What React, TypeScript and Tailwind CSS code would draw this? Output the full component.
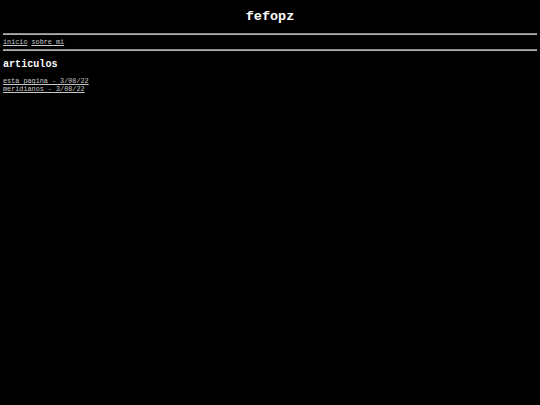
export default function App() {
  return (
    <div className="min-h-[405px] w-full bg-black px-[3px] pt-[8px] text-white" style={{ fontFamily: '"Liberation Mono", "Courier New", monospace' }}>
      <h1 className="h-[18px] text-center text-[13.5px] font-bold leading-[18px]">fefopz</h1>
      <div className="mt-[7px] h-[2px] border-t border-b border-[#8a8a8a] border-b-[#b0b0b0]" />
      <nav className="flex h-[14px] items-center gap-[4px] text-[6.8px] leading-[14px] text-[#c8c8c8]">
        <a className="underline">inicio</a>
        <a className="underline">sobre mi</a>
      </nav>
      <div className="h-[2px] border-t border-b border-[#8a8a8a] border-b-[#b0b0b0]" />
      <h2 className="mt-[7px] h-[14px] text-[10.1px] font-bold leading-[14px]">articulos</h2>
      <ul className="mt-[6px] text-[6.8px] leading-[7.5px] text-[#c8c8c8]">
        <li><a className="underline">esta pagina - 3/08/22</a></li>
        <li><a className="underline">meridianos - 3/08/22</a></li>
      </ul>
    </div>
  );
}
